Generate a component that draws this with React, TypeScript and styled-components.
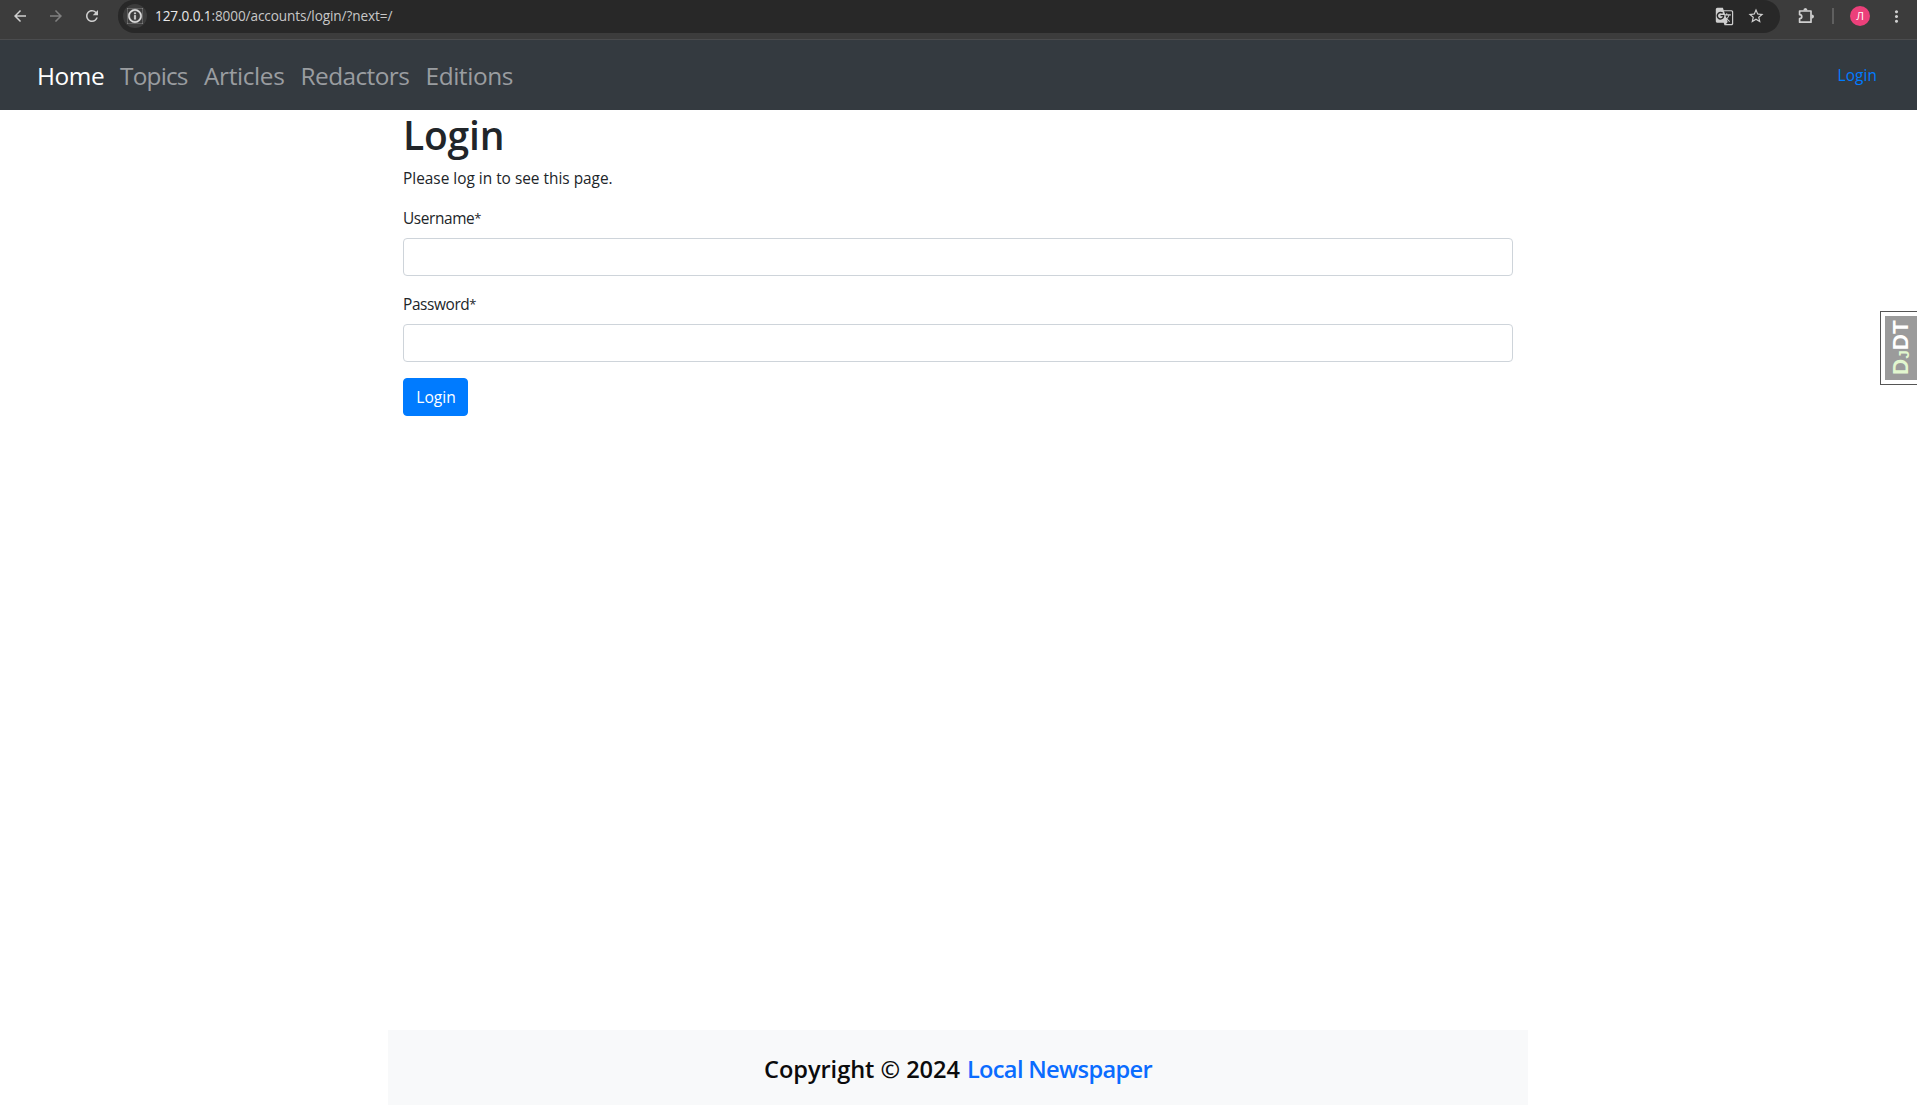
import React from "react";
import styled, { createGlobalStyle } from "styled-components";
import {
  MdArrowBack,
  MdArrowForward,
  MdGTranslate,
  MdInfoOutline,
  MdMoreVert,
  MdRefresh,
  MdStarBorder,
} from "react-icons/md";

const GlobalStyle = createGlobalStyle`
  *, *::before, *::after { box-sizing: border-box; }
  body {
    margin: 0;
    background: #fff;
    color: #212529;
    font-family: "Segoe UI", "Open Sans", "Noto Sans", sans-serif;
    font-size: 15.4px;
    line-height: 24px;
  }
  a { text-decoration: none; }
`;

const Window = styled.div`
  display: flex;
  flex-direction: column;
  height: 1105px;
  overflow: hidden;
`;

/* Browser toolbar */
const Toolbar = styled.header`
  display: flex;
  align-items: flex-start;
  height: 40px;
  flex: none;
  background: #3c3c3c;
  border-bottom: 1px solid #4b4c4e;
`;

const ToolButton = styled.button<{ $width: number; $color?: string }>`
  display: flex;
  align-items: center;
  justify-content: center;
  width: ${(p) => p.$width}px;
  height: 32px;
  padding: 0;
  border: 0;
  background: none;
  color: ${(p) => p.$color ?? "#cfcfcf"};
`;

const NavButtons = styled.div`
  display: flex;
  width: 118px;
  padding-left: 2px;
`;

const AddressBar = styled.div`
  display: flex;
  align-items: center;
  width: 1662px;
  height: 33px;
  padding: 0 8px 1px 5px;
  border-radius: 16px 17px 17px 17px;
  background: #282828;
`;

const SiteInfo = styled.span`
  display: flex;
  align-items: center;
  justify-content: center;
  width: 24px;
  height: 24px;
  border-radius: 50%;
  background: #3c3c3c;
  color: #e3e3e3;

  svg {
    stroke: currentColor;
    stroke-width: 0.7px;
  }
`;

const Url = styled.span`
  flex: 1;
  padding-left: 8px;
  color: #c7c7c7;
  font-size: 13.6px;
  letter-spacing: -0.1px;
`;

const UrlHost = styled.span`
  color: #e8e8e8;
`;

const Divider = styled.span`
  width: 2px;
  height: 16px;
  margin: 8px 16px 0 0;
  background: #5f5f5f;
`;

const Avatar = styled.span`
  display: flex;
  align-items: center;
  justify-content: center;
  width: 20px;
  height: 20px;
  margin: 6px 16px 0 0;
  border-radius: 50%;
  background: #ec407a;
  color: #fff;
  font-size: 11px;
  line-height: 20px;
`;

/* Site navigation */
const Navbar = styled.nav`
  display: flex;
  align-items: center;
  justify-content: space-between;
  height: 70px;
  flex: none;
  padding: 2px 40px 0 37px;
  background: #343a40;
`;

const NavLinks = styled.div`
  display: flex;
  gap: 16px;
`;

const NavLink = styled.a<{ $width: number; $spacing: number; $active?: boolean }>`
  width: ${(p) => p.$width}px;
  color: ${(p) => (p.$active ? "#fff" : "#9a9da0")};
  font-size: 24.4px;
  line-height: 36px;
  letter-spacing: ${(p) => p.$spacing}px;
  white-space: nowrap;
`;

const LoginLink = styled.a`
  color: #007bff;
  letter-spacing: 0.1px;
`;

/* Page */
const Container = styled.main`
  flex: 1;
  width: 1140px;
  margin-left: 388px;
  padding: 0 15px;
`;

const Title = styled.h1`
  margin: 0 0 8px;
  padding-top: 1px;
  font-size: 39px;
  font-weight: 600;
  line-height: 48px;
  letter-spacing: -0.2px;
`;

const Lead = styled.p`
  margin: 0 0 16px;
`;

const Field = styled.div`
  display: flex;
  flex-direction: column;
  margin-bottom: 16px;
`;

const Label = styled.label`
  height: 24px;
  margin-bottom: 7px;
  letter-spacing: -0.38px;

  ${Field} + ${Field} & {
    margin-top: 1px;
  }
`;

const Asterisk = styled.span`
  font-size: 13px;
  line-height: 1;
  vertical-align: 1px;
`;

const Input = styled.input`
  width: 100%;
  height: 38px;
  padding: 6px 12px;
  border: 1px solid #ced4da;
  border-radius: 4px;
  background: #fff;
  font: inherit;
  outline: none;
`;

const Submit = styled.button`
  display: block;
  width: 65px;
  height: 38px;
  padding: 0 0 0 1px;
  border: 1px solid #007bff;
  border-radius: 4px;
  background: #007bff;
  color: #fff;
  font: inherit;
  font-size: 15.6px;
`;

const Footer = styled.footer`
  display: flex;
  justify-content: center;
  gap: 7px;
  width: 1140px;
  height: 75px;
  margin-left: 388px;
  padding-top: 24px;
  background: #f8f9fa;
  color: #0b0b0c;
  font-size: 23.6px;
  font-weight: 600;
  line-height: 30px;
  letter-spacing: -0.05px;
`;

const FooterLink = styled.a`
  color: #0a6cff;
  letter-spacing: -0.66px;
`;

/* Debug toolbar handle, floating over the page */
const DebugHandle = styled.div`
  position: absolute;
  top: 311px;
  right: 0;
  width: 37px;
  height: 74px;
  padding: 4px 0 4px 4px;
  border: 1px solid #555;
  border-right: 0;
  background: #fff;
`;

const DebugLabel = styled.div`
  display: flex;
  align-items: center;
  justify-content: center;
  width: 32px;
  height: 64px;
  background: #9b9b9b;
  color: #fff;
  font: bold 22.5px/32px "Liberation Sans", Arial, sans-serif;
  writing-mode: vertical-rl;
  text-orientation: sideways;
  transform: rotate(180deg);
`;

const DebugAccent = styled.span<{ $small?: boolean }>`
  color: #e2f7cf;
  font-size: ${(p) => (p.$small ? 15.5 : 22.5)}px;
  line-height: 1;
  vertical-align: ${(p) => (p.$small ? "-1px" : "baseline")};
`;

const ExtensionsIcon = () => (
  <svg width="18" height="18" viewBox="0 0 18 18" fill="none">
    <path
      d="M2.6 4H14v11.2H2.6v-3.6c2.9-.2 2.9-3.7 0-3.9z"
      stroke="currentColor"
      strokeWidth="1.7"
      strokeLinejoin="round"
    />
    <path d="M6.3 3.6a2.1 2.5 0 0 1 4.2 0z" fill="currentColor" />
    <path d="M14.500 7.500a2.500 2.100 0 0 1 0 4.200z" fill="currentColor" />
  </svg>
);

const links = [
  { text: "Home", width: 67, spacing: -0.4, active: true },
  { text: "Topics", width: 68, spacing: -0.8 },
  { text: "Articles", width: 80.5, spacing: -0.37 },
  { text: "Redactors", width: 109, spacing: -0.56 },
  { text: "Editions", width: 90, spacing: -0.42 },
];

const fields = [
  { id: "username", label: "Username", type: "text" },
  { id: "password", label: "Password", type: "password" },
];

export default function App() {
  return (
    <>
      <GlobalStyle />
      <Window>
        <Toolbar>
          <NavButtons>
            <ToolButton $width={36}>
              <MdArrowBack size={18} />
            </ToolButton>
            <ToolButton $width={36} $color="#808080">
              <MdArrowForward size={18} />
            </ToolButton>
            <ToolButton $width={36}>
              <MdRefresh size={18} />
            </ToolButton>
          </NavButtons>
          <AddressBar>
            <SiteInfo>
              <MdInfoOutline size={16} />
            </SiteInfo>
            <Url>
              <UrlHost>127.0.0.1</UrlHost>:8000/accounts/login/?next=/
            </Url>
            <ToolButton $width={32}>
              <MdGTranslate size={19} />
            </ToolButton>
            <ToolButton $width={32}>
              <MdStarBorder size={18} />
            </ToolButton>
          </AddressBar>
          <ToolButton $width={52}>
            <ExtensionsIcon />
          </ToolButton>
          <Divider />
          <Avatar>Л</Avatar>
          <ToolButton $width={20}>
            <MdMoreVert size={19} />
          </ToolButton>
        </Toolbar>
        <Navbar>
          <NavLinks>
            {links.map((l) => (
              <NavLink key={l.text} href="#" $width={l.width} $spacing={l.spacing} $active={l.active}>
                {l.text}
              </NavLink>
            ))}
          </NavLinks>
          <LoginLink href="#">Login</LoginLink>
        </Navbar>
        <Container>
          <Title>Login</Title>
          <Lead>Please log in to see this page.</Lead>
          {fields.map((f) => (
            <Field key={f.id}>
              <Label htmlFor={f.id}>
                {f.label}
                <Asterisk>*</Asterisk>
              </Label>
              <Input id={f.id} type={f.type} />
            </Field>
          ))}
          <Submit>Login</Submit>
        </Container>
        <Footer>
          <span>Copyright © 2024</span>
          <FooterLink href="#">Local Newspaper</FooterLink>
        </Footer>
      </Window>
      <DebugHandle>
        <DebugLabel>
          <span>
            <DebugAccent>D</DebugAccent>
            <DebugAccent $small>J</DebugAccent>DT
          </span>
        </DebugLabel>
      </DebugHandle>
    </>
  );
}
